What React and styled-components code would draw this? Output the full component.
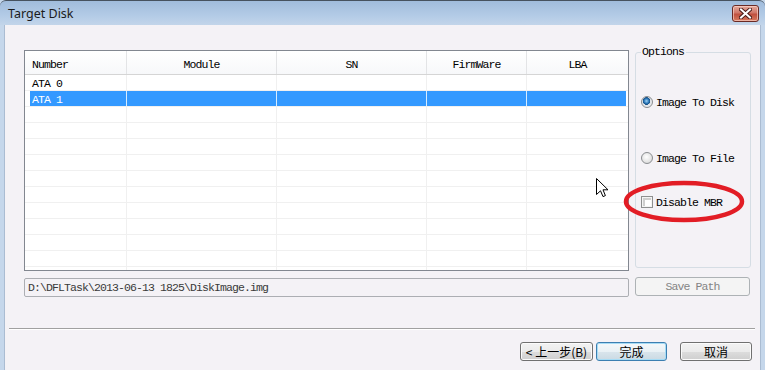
import React from "react";
import styled, { createGlobalStyle } from "styled-components";

const MONO = `"Liberation Mono", "DejaVu Sans Mono", monospace`;
const CJK = `"Noto Sans CJK SC", "Liberation Sans", sans-serif`;

const GlobalStyle = createGlobalStyle`
  html, body { margin: 0; padding: 0; background: #f4f2f6; }
  body { width: 765px; height: 370px; overflow: hidden; }
  * { box-sizing: border-box; }
`;

const columns = [
	{ title: "Number", width: 102, align: "left" },
	{ title: "Module", width: 150 },
	{ title: "SN", width: 150 },
	{ title: "FirmWare", width: 100 },
	{ title: "LBA", width: 101, last: true },
];

const rows = [
	{ num: "ATA 0" },
	{ num: "ATA 1", selected: true },
	...Array.from({ length: 11 }, () => ({ num: "" })),
];

const TargetDisk = () => {
	return (
		<Window>
			<TitleBar>
				<span>Target Disk</span>
				<CloseButton>
					<svg width="13" height="11" viewBox="0 0 13 11">
						<path
							d="M2 1.5 L11 9.5 M11 1.5 L2 9.5"
							stroke="#4a1d1a"
							strokeWidth="4"
							strokeLinecap="square"
						/>
						<path
							d="M2 1.5 L11 9.5 M11 1.5 L2 9.5"
							stroke="#ffffff"
							strokeWidth="2"
							strokeLinecap="square"
						/>
					</svg>
				</CloseButton>
			</TitleBar>
			<Frame>
				<Body>
					<Main>
						<TableCol>
							<Table>
								<HeaderRow>
									{columns.map((c) => (
										<HeaderCell key={c.title} $w={c.width} $align={c.align} $last={c.last}>
											{c.title}
										</HeaderCell>
									))}
								</HeaderRow>
								{rows.map((r, i) => (
									<Row key={i} $selected={r.selected}>
										{columns.map((c, j) => (
											<Cell
												key={c.title}
												$w={c.width}
												$last={c.last}
												$first={j === 0}
												$selected={r.selected}
											>
												{j === 0 ? r.num : ""}
											</Cell>
										))}
									</Row>
								))}
							</Table>
							<PathField>D:\DFLTask\2013-06-13 1825\DiskImage.img</PathField>
						</TableCol>
						<RightCol>
							<GroupBox>
								<Legend>Options</Legend>
								<OptionRow $top={36}>
									<Radio $checked />
									<span>Image To Disk</span>
								</OptionRow>
								<OptionRow $top={40}>
									<Radio />
									<span>Image To File</span>
								</OptionRow>
								<OptionRow $top={28}>
									<Check />
									<span>Disable MBR</span>
								</OptionRow>
							</GroupBox>
							<SavePath disabled>Save Path</SavePath>
						</RightCol>
					</Main>
					<Separator />
					<ButtonRow>
						<DlgButton $w={73}>&lt; 上一步(B)</DlgButton>
						<DlgButton $w={71} $gap={3} $default>完成</DlgButton>
						<DlgButton $w={72} $gap={13}>取消</DlgButton>
					</ButtonRow>
				</Body>
			</Frame>

			<Annotation width="130" height="46" viewBox="0 0 130 46" style={{ left: 619, top: 179 }}>
				<ellipse cx="65" cy="22.5" rx="58" ry="18.5" fill="none" stroke="#e21d25" strokeWidth="4.5" />
			</Annotation>
			<Annotation width="14" height="21" viewBox="0 0 14 21" style={{ left: 596, top: 178 }}>
				<path
					d="M0.5 0.5 L0.5 16.5 L4.5 12.8 L7 18.6 L9.4 17.6 L7 11.8 L12 11.8 Z"
					fill="#ffffff"
					stroke="#000000"
					strokeWidth="1"
					strokeLinejoin="miter"
				/>
			</Annotation>
		</Window>
	);
};

export default function App() {
	return (
		<>
			<GlobalStyle />
			<TargetDisk />
		</>
	);
}

const Window = styled.div`
	position: relative;
	width: 765px;
	height: 370px;
	display: flex;
	flex-direction: column;
	overflow: hidden;
	background: #c5d7eb;
`;

const TitleBar = styled.div`
	height: 25px;
	flex: none;
	display: flex;
	align-items: center;
	justify-content: space-between;
	padding: 0 6px 0 8px;
	background: linear-gradient(#a0bcdc, #b3cbe6 60%, #c2d5ea);
	border-top: 1px solid #46525f;
	border-radius: 6px 6px 0 0;
	font-family: "Noto Sans", "Open Sans", sans-serif;
	font-size: 12.5px;
	color: #1b1b1b;
`;

const CloseButton = styled.div`
	width: 27px;
	height: 17px;
	display: flex;
	align-items: center;
	justify-content: center;
	border: 1px solid #6a2a25;
	border-radius: 3px;
	background: linear-gradient(#e4a99c, #d07668 45%, #c0503f 55%, #d77a5f);
	box-shadow: inset 0 0 0 1px rgba(255, 220, 210, 0.6);
`;

const Frame = styled.div`
	flex: 1;
	display: flex;
	padding: 0 4px;
`;

const Body = styled.div`
	flex: 1;
	display: flex;
	flex-direction: column;
	background: #f4f2f6;
	border-left: 1px solid #aabcd2;
	border-right: 1px solid #aabcd2;
`;

const Main = styled.div`
	display: flex;
	gap: 5px;
	padding: 21px 0 0 19px;
`;

const TableCol = styled.div`
	display: flex;
	flex-direction: column;
	gap: 7px;
	padding-top: 4px;
	width: 605px;
`;

const Table = styled.div`
	height: 221px;
	border: 1px solid #828790;
	background: #ffffff;
	overflow: hidden;
	font-family: ${MONO};
	font-size: 11.5px;
	letter-spacing: -0.9px;
	color: #000;
`;

const HeaderRow = styled.div`
	display: flex;
	height: 24px;
	border-bottom: 1px solid #d5d5d5;
	background: linear-gradient(#ffffff, #f7f8fa);
`;

const HeaderCell = styled.div`
	width: ${(p) => p.$w}px;
	flex: none;
	line-height: 24px;
	padding-top: 2px;
	text-align: ${(p) => p.$align || "center"};
	padding-left: ${(p) => (p.$align === "left" ? "7px" : "0")};
	border-right: ${(p) => (p.$last ? "none" : "1px solid #e3e4e6")};
`;

const Row = styled.div`
	display: flex;
	height: 16px;
	border-bottom: 1px solid #f0f0f0;
	color: ${(p) => (p.$selected ? "#ffffff" : "#000000")};
`;

const Cell = styled.div`
	width: ${(p) => p.$w}px;
	flex: none;
	line-height: 16px;
	padding-top: 1px;
	padding-left: 7px;
	white-space: pre;
	border-right: ${(p) =>
		p.$last ? "none" : p.$selected ? "1px solid #d6ecff" : "1px solid #f0f0f0"};
	background: ${(p) =>
		!p.$selected
			? "transparent"
			: p.$first
			? "linear-gradient(to right, transparent 5px, #3399ff 5px)"
			: p.$last
			? "linear-gradient(to left, transparent 2px, #3399ff 2px)"
			: "#3399ff"};
`;

const PathField = styled.div`
	height: 19px;
	border: 1px solid #acaeb3;
	border-radius: 2px;
	padding-left: 3px;
	font-family: ${MONO};
	font-size: 11.5px;
	letter-spacing: -0.9px;
	line-height: 18px;
	color: #3a3a3a;
	white-space: pre;
`;

const RightCol = styled.div`
	width: 117px;
	display: flex;
	flex-direction: column;
	padding-left: 1px;
`;

const GroupBox = styled.fieldset`
	margin: 0;
	height: 222px;
	padding: 0 5px;
	border: 1px solid #d5dde4;
	border-radius: 3px;
	display: flex;
	flex-direction: column;
	font-family: ${MONO};
	font-size: 11.5px;
	letter-spacing: -0.9px;
`;

const Legend = styled.legend`
	padding: 0 2px 0 1px;
	margin-left: 0;
	line-height: 12px;
	color: #000;
`;

const OptionRow = styled.div`
	margin-top: ${(p) => p.$top}px;
	height: 16px;
	display: flex;
	align-items: center;
	gap: 3px;
	color: #000;
`;

const Radio = styled.span`
	width: 12px;
	height: 12px;
	flex: none;
	border-radius: 50%;
	border: 1px solid #8a8d90;
	background: ${(p) =>
		p.$checked
			? "radial-gradient(circle at 45% 40%, #9fd2f4 0, #2b77b8 2.4px, #154d82 3.6px, #dfe3e8 4px, #f4f4f4 100%)"
			: "radial-gradient(circle at 45% 40%, #ffffff 0, #e4e4e4 60%, #cfcfcf 100%)"};
`;

const Check = styled.span`
	width: 12px;
	height: 12px;
	flex: none;
	border: 1px solid #8e8f8f;
	background: #fff;
	box-shadow: inset 0 0 0 1px #f4f4f4, inset 1px 1px 0 2px #cfcfcf;
`;

const SavePath = styled.button`
	margin-top: 9px;
	width: 115px;
	height: 19px;
	padding: 0;
	border: 1px solid #adb2b5;
	border-radius: 3px;
	background: #f4f4f4;
	color: #848484;
	font-family: ${MONO};
	font-size: 11.5px;
	letter-spacing: -0.9px;
`;

const Separator = styled.div`
	margin: 31px 5px 0 4px;
	height: 2px;
	border-top: 1px solid #a0a0a0;
	border-bottom: 1px solid #ffffff;
`;

const ButtonRow = styled.div`
	display: flex;
	justify-content: flex-end;
	padding-right: 8px;
	margin-top: 12px;
`;

const DlgButton = styled.button`
	width: ${(p) => p.$w}px;
	height: 19px;
	margin-left: ${(p) => p.$gap || 0}px;
	padding: 0;
	border: 1px solid ${(p) => (p.$default ? "#3c7fb1" : "#707070")};
	border-radius: 3px;
	background: ${(p) =>
		p.$default
			? "linear-gradient(#f4f8fa 0%, #e9f1f5 50%, #d9e5ec 50%, #cbdae3 100%)"
			: "linear-gradient(#f2f2f2 0%, #ebebeb 50%, #dddddd 50%, #cfcfcf 100%)"};
	box-shadow: ${(p) => (p.$default ? "inset 0 0 0 1px #a6dcf5" : "inset 0 0 0 1px #fbfbfb")};
	font-family: ${CJK};
	font-size: 12px;
	line-height: 17px;
	color: #000;
`;

const Annotation = styled.svg`
	position: absolute;
	overflow: visible;
	pointer-events: none;
`;
